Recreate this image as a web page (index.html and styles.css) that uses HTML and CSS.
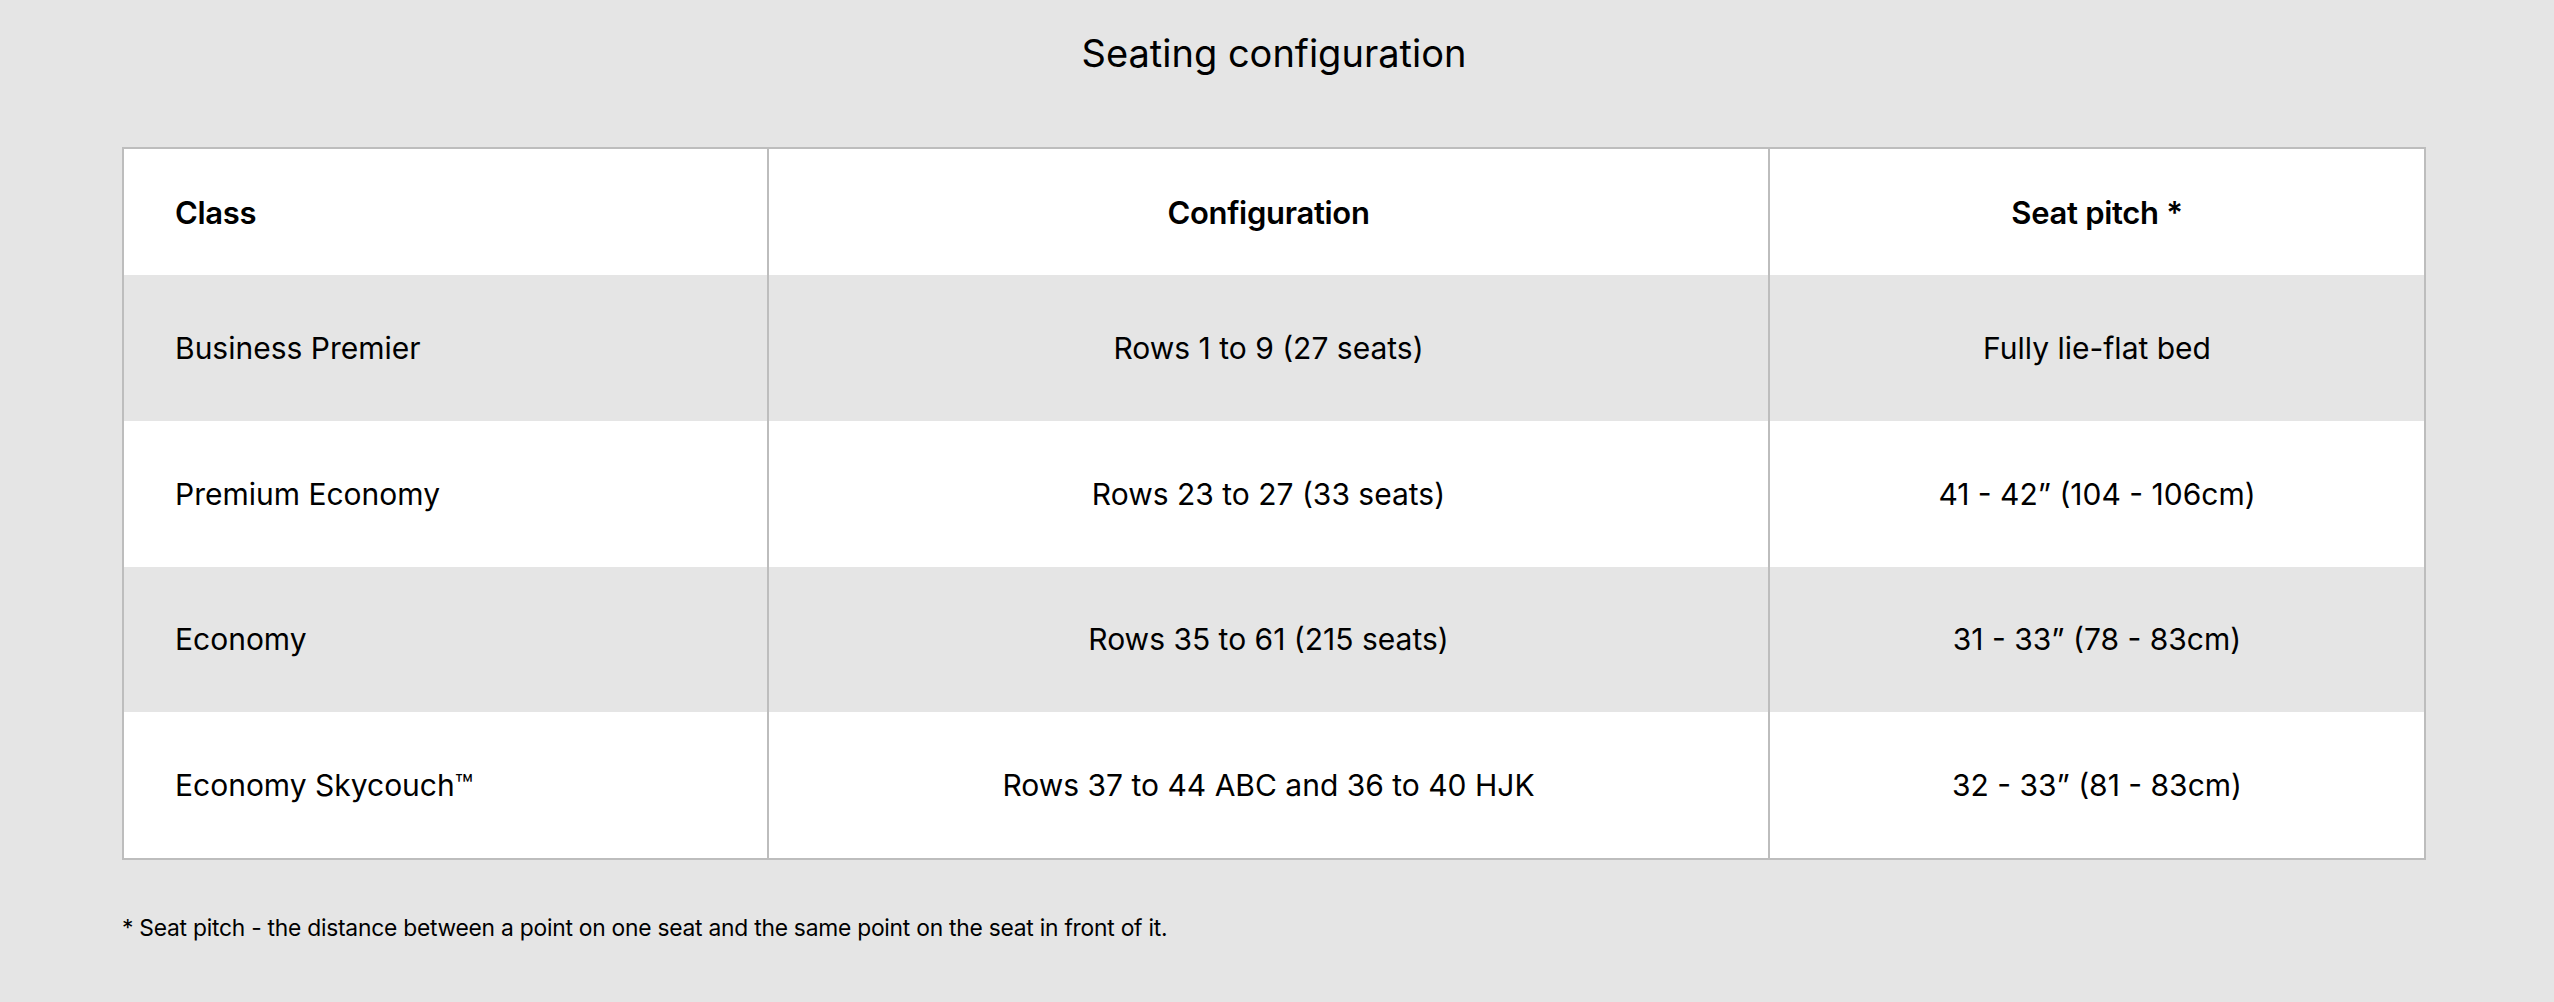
FILE: index.html
```html
<!DOCTYPE html>
<html lang="en">
<head>
<meta charset="utf-8">
<title>Seating configuration</title>
<link rel="stylesheet" href="styles.css">
</head>
<body>
<main class="page">
  <h2 class="title">Seating configuration</h2>
  <table class="seats">
    <colgroup>
      <col class="c1"><col class="c2"><col class="c3">
    </colgroup>
    <thead>
      <tr class="head">
        <th class="left">Class</th>
        <th class="mid">Configuration</th>
        <th class="mid">Seat pitch *</th>
      </tr>
    </thead>
    <tbody>
      <tr class="row alt">
        <td class="left">Business Premier</td>
        <td class="mid">Rows 1 to 9 (27 seats)</td>
        <td class="mid">Fully lie-flat bed</td>
      </tr>
      <tr class="row">
        <td class="left">Premium Economy</td>
        <td class="mid">Rows 23 to 27 (33 seats)</td>
        <td class="mid">41 - 42” (104 - 106cm)</td>
      </tr>
      <tr class="row alt">
        <td class="left">Economy</td>
        <td class="mid">Rows 35 to 61 (215 seats)</td>
        <td class="mid">31 - 33” (78 - 83cm)</td>
      </tr>
      <tr class="row">
        <td class="left">Economy Skycouch™</td>
        <td class="mid">Rows 37 to 44 ABC and 36 to 40 HJK</td>
        <td class="mid">32 - 33” (81 - 83cm)</td>
      </tr>
    </tbody>
  </table>
  <p class="note">* Seat pitch - the distance between a point on one seat and the same point on the seat in front of it.</p>
</main>
</body>
</html>
```
FILE: styles.css
```css
html, body {
  margin: 0;
  padding: 0;
  background: #e5e5e5;
}
body {
  font-family: Inter, "Noto Sans", "Liberation Sans", sans-serif;
  color: #000;
}
.page {
  padding: 30px 128px 0 122px;
  display: flex;
  flex-direction: column;
}
.title {
  margin: 0;
  font-size: 38px;
  font-weight: 400;
  line-height: 46px;
  text-align: center;
}
.seats {
  margin-top: 71px;
  width: 2304px;
  box-sizing: border-box;
  border-collapse: separate;
  border-spacing: 0;
  border: 2px solid #bdbdbd;
  table-layout: fixed;
  background: #fff;
}
.c1 { width: 643px; }
.c2 { width: 1001px; }
.c3 { width: 656px; }
.seats th, .seats td {
  padding: 0;
  vertical-align: middle;
}
.seats th + th, .seats td + td {
  border-left: 2px solid #bdbdbd;
}
.head {
  height: 126px;
}
.head th {
  font-size: 31px;
  font-weight: 600;
  letter-spacing: -0.3px;
}
.row {
  height: 145.75px;
}
.row td {
  font-size: 30px;
  font-weight: 400;
}
.alt {
  background: #e5e5e5;
}
.left {
  text-align: left;
  padding-left: 51px !important;
}
.mid {
  text-align: center;
}
.note {
  margin: 54px 0 0;
  font-size: 22.8px;
  line-height: 28px;
  letter-spacing: -0.24px;
}
```
